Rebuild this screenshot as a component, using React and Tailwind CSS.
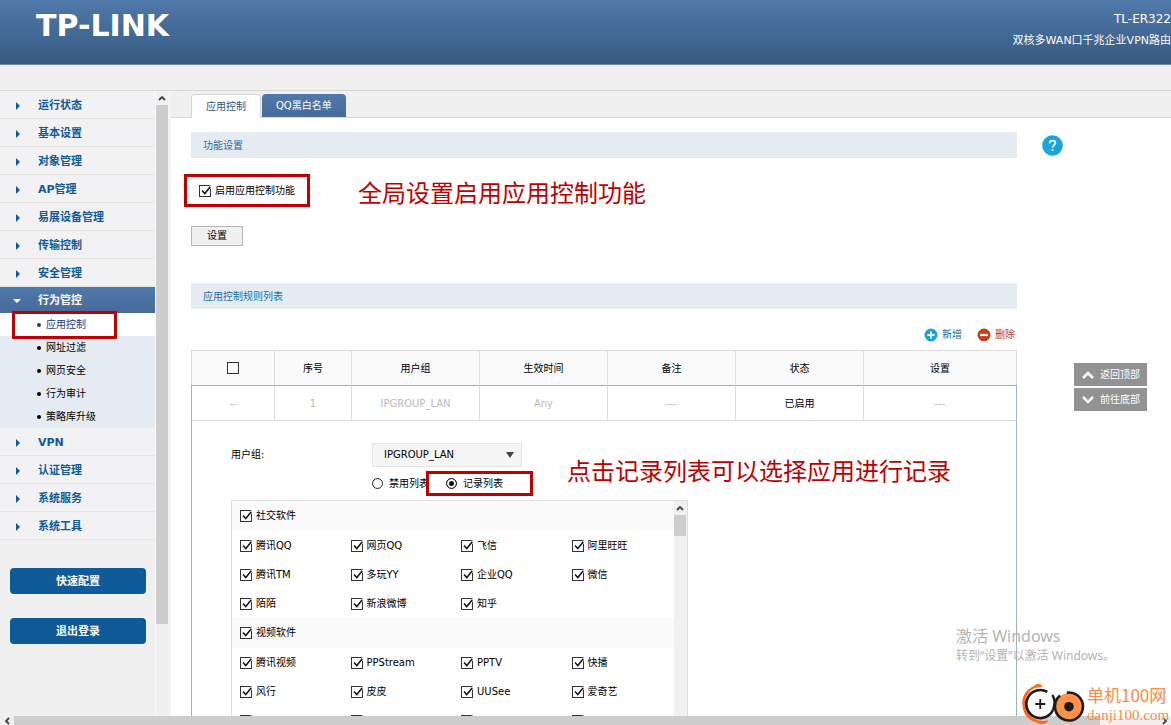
import React, { useState } from 'react';
import { clsx } from 'clsx';

// === DATA ===
const MENU_TOP = ['运行状态', '基本设置', '对象管理', 'AP管理', '易展设备管理', '传输控制', '安全管理'];
const MENU_BOTTOM = ['VPN', '认证管理', '系统服务', '系统工具'];
const SUB_MENU = ['应用控制', '网址过滤', '网页安全', '行为审计', '策略库升级'];

const APP_GROUPS = [
  {
    name: '社交软件',
    apps: ['腾讯QQ', '网页QQ', '飞信', '阿里旺旺', '腾讯TM', '多玩YY', '企业QQ', '微信', '陌陌', '新浪微博', '知乎'],
  },
  {
    name: '视频软件',
    apps: ['腾讯视频', 'PPStream', 'PPTV', '快播', '风行', '皮皮', 'UUSee', '爱奇艺'],
    unnamed: 4,
  },
];

const COLUMNS = [
  { title: '序号', width: 'w-[77px]', value: '1' },
  { title: '用户组', width: 'w-[128px]', value: 'IPGROUP_LAN' },
  { title: '生效时间', width: 'w-[128px]', value: 'Any' },
  { title: '备注', width: 'w-[128px]', value: '---' },
  { title: '状态', width: 'w-[128px]', value: '已启用', active: true },
  { title: '设置', width: '', value: '---' },
];

// === SMALL PARTS ===
const CheckBox = ({ label, defaultChecked = true, hideLabel = false }) => (
  <label className="flex items-center gap-1">
    <span className="relative block size-3 shrink-0">
      <input
        type="checkbox"
        defaultChecked={defaultChecked}
        aria-label={hideLabel ? label : undefined}
        className="peer block size-3 appearance-none border border-[#333] bg-white"
      />
      <svg viewBox="0 0 12 12" className="pointer-events-none absolute inset-0 hidden overflow-visible peer-checked:block">
        <path d="M10.5 0.5H12V3.5L10.5 4z" fill="#fff" />
        <path d="M3 5.5L5.8 8.5L11.3 1.8" fill="none" stroke="#111" strokeWidth="1.5" />
      </svg>
    </span>
    {!hideLabel && <span className="whitespace-nowrap">{label}</span>}
  </label>
);

const RadioButton = ({ label, checked, onChange }) => (
  <label className="flex items-center gap-[6px] whitespace-nowrap">
    <input
      type="radio"
      name="list-type"
      checked={checked}
      onChange={onChange}
      className="size-[11px] shrink-0 appearance-none rounded-full border border-[#222] bg-white checked:bg-[#111] checked:shadow-[inset_0_0_0_2px_#fff]"
    />
    {label}
  </label>
);

const ArrowHead = ({ className, d }) => (
  <svg viewBox="0 0 8 8" className={clsx('size-2 fill-none', className)}>
    <path d={d} stroke="currentColor" strokeWidth="1.8" />
  </svg>
);

const SectionTitle = ({ children }) => (
  <h2 className="flex h-[26px] items-center bg-[#e4ebf2] px-3 pt-[2px] text-[#1f6ba5]">{children}</h2>
);

const MenuItem = ({ label }) => (
  <li>
    <a href="#menu" className="flex h-7 items-center border-b border-[#e6e4df] pt-[3px] pl-4 text-[11px] font-bold text-[#105a97]">
      <svg viewBox="0 0 4 8" className="mr-[18px] h-2 w-1 fill-current">
        <path d="M0 0L4 4L0 8z" />
      </svg>
      {label}
    </a>
  </li>
);

// === PAGE AREAS ===
const Header = () => (
  <header className="shrink-0">
    <div className="flex h-[65px] items-start justify-between overflow-hidden border-b border-[#6f86a0] bg-linear-to-b from-[#5079aa] to-[#375a82] pl-9 text-white">
      <h1 className="pt-[10px] text-[30px] leading-8 font-bold">TP-LINK</h1>
      <div className="pt-[9px] text-right text-[11px] leading-[21px]">
        <p className="text-xs leading-[21px]">TL-ER322</p>
        <p>双核多WAN口千兆企业VPN路由</p>
      </div>
    </div>
    <div className="h-[26px] border-b border-[#d6d6d6] bg-[#f0f0f0]" />
  </header>
);

const Sidebar = () => (
  <aside className="flex w-[171px] shrink-0 bg-[#f0f0f0]">
    <div className="min-w-0 flex-1 border-r border-[#fafafa]">
      <ul className="bg-[#f2f2f4]">
        {MENU_TOP.map((label) => (
          <MenuItem key={label} label={label} />
        ))}
        <li>
          <a href="#behavior" className="flex h-[26px] items-center bg-linear-to-b from-[#5079aa] to-[#46699a] pt-[2px] pl-[13px] text-[11px] font-bold text-white">
            <svg viewBox="0 0 8 4" className="mr-[17px] h-1 w-2 fill-current">
              <path d="M0 0H8L4 4z" />
            </svg>
            行为管控
          </a>
          <ul className="bg-[#e4ebf2]">
            {SUB_MENU.map((label, index) => (
              <li key={label} className={clsx('relative', index === 0 && 'bg-white')}>
                <a href="#sub" className={clsx('flex h-[23px] items-center gap-[5px] pl-[37px]', index === 0 && 'text-[#23388c]')}>
                  <span className="size-1 rounded-full bg-current" />
                  {label}
                </a>
                {index === 0 && (
                  <span className="pointer-events-none absolute -top-[2px] left-3 z-10 h-7 w-[105px] border-3 border-[#c00000]" />
                )}
              </li>
            ))}
          </ul>
        </li>
        {MENU_BOTTOM.map((label) => (
          <MenuItem key={label} label={label} />
        ))}
      </ul>
      <div className="flex flex-col gap-6 pt-7 pr-[9px] pl-[10px] text-[11px] font-bold text-white">
        <button type="button" className="h-[26px] rounded-sm bg-[#105a97] pt-[2px]">快速配置</button>
        <button type="button" className="h-[26px] rounded-sm bg-[#105a97] pt-[2px]">退出登录</button>
      </div>
    </div>
    {/* Menu scrollbar */}
    <div className="flex w-[15px] flex-col border-r-3 border-[#f4f4f4] bg-[#f0f0f0]">
      <div className="flex h-[14px] items-center justify-center text-[#444]">
        <ArrowHead d="M1 6L4 3L7 6" />
      </div>
      <div className="h-[83%] bg-[#cdcdcd]" />
    </div>
  </aside>
);

const Tabs = () => (
  <div className="flex h-[27px] shrink-0 items-end gap-px border-b border-[#d6d6d6] bg-[#f0f0f0] pl-5">
    <button type="button" className="-mb-px h-6 rounded-t border border-b-0 border-[#d6d6d6] bg-white px-[14px] text-[#2f5684]">
      应用控制
    </button>
    <button type="button" className="h-[23px] rounded-t bg-linear-to-b from-[#5079aa] to-[#46699a] px-[14px] text-white">
      QQ黑白名单
    </button>
  </div>
);

const Toolbar = () => (
  <div className="flex h-[41px] items-center justify-end gap-[15px] pt-[11px] pr-[2px]">
    <button type="button" className="flex items-center gap-1 text-[#1f6ba5]">
      <svg viewBox="0 0 14 14" className="size-[14px]">
        <circle cx="7" cy="7" r="6.5" fill="#17a5e0" />
        <path d="M7 3.5V10.5M3.5 7H10.5" stroke="#fff" strokeWidth="1.8" />
      </svg>
      新增
    </button>
    <button type="button" className="flex items-center gap-1 text-[#c0401c]">
      <svg viewBox="0 0 14 14" className="size-[14px]">
        <circle cx="7" cy="7" r="6.5" fill="#bf4322" />
        <path d="M3.2 7H10.8" stroke="#fff" strokeWidth="2.2" />
      </svg>
      删除
    </button>
  </div>
);

const RuleTable = () => (
  <table className="w-full table-fixed border-separate border-spacing-0 text-center">
    <thead>
      <tr className="h-[35px] bg-[#fafafa]">
        <th className="w-[83px] border-t border-l border-[#ddd] font-normal">
          <span className="flex justify-center">
            <CheckBox label="全选" defaultChecked={false} hideLabel />
          </span>
        </th>
        {COLUMNS.map((col) => (
          <th key={col.title} className={clsx('border-t border-l border-[#ddd] pt-[2px] font-normal last:border-r', col.width)}>
            {col.title}
          </th>
        ))}
      </tr>
    </thead>
    <tbody>
      <tr className="h-9 text-[#bbb]">
        <td className="border border-t-[#9db0c8] border-r-0 border-b-[#ddd] border-l-[#9db0c8] pt-[2px]">--</td>
        {COLUMNS.map((col) => (
          <td
            key={col.title}
            className={clsx(
              'border-y border-l border-t-[#9db0c8] border-b-[#ddd] border-l-[#ddd] pt-[2px] last:border-r last:border-r-[#9db0c8]',
              col.active && 'text-black'
            )}
          >
            {col.value}
          </td>
        ))}
      </tr>
    </tbody>
  </table>
);

const AppList = () => (
  <div className="mt-1 flex w-[457px] border border-b-0 border-[#ddd]">
    <div className="flex-1">
      {APP_GROUPS.map((group) => (
        <section key={group.name}>
          <div className="flex h-[30px] items-center bg-[#fafafa] pl-2">
            <CheckBox label={group.name} />
          </div>
          <div className="grid grid-cols-4">
            {group.apps.map((name) => (
              <div key={name} className="flex h-[29px] items-center pl-2">
                <CheckBox label={name} />
              </div>
            ))}
            {Array.from({ length: group.unnamed || 0 }, (_, i) => (
              <div key={i} className="flex h-[29px] items-center pl-2">
                <CheckBox label={`${group.name} ${i + 1}`} hideLabel />
              </div>
            ))}
          </div>
        </section>
      ))}
    </div>
    <div className="w-[13px] bg-[#f0f0f0] pr-px">
      <div className="flex h-[14px] items-center justify-center text-[#444]">
        <ArrowHead d="M1 6L4 3L7 6" />
      </div>
      <div className="h-[21px] bg-[#cdcdcd]" />
    </div>
  </div>
);

const RulePanel = () => {
  const [listType, setListType] = useState('record');

  return (
    <div className="relative min-h-0 flex-1 overflow-hidden border-x border-[#9db0c8] pt-[22px] pl-[39px]">
      <div className="flex items-center">
        <label htmlFor="user-group" className="w-[141px]">用户组:</label>
        <div className="relative w-[150px]">
          <select id="user-group" className="block h-6 w-full appearance-none border border-[#e4e4e4] bg-[#f5f5f5] pl-[11px]">
            <option>IPGROUP_LAN</option>
          </select>
          <svg viewBox="0 0 8 6" className="pointer-events-none absolute top-[9px] right-2 h-[6px] w-2 fill-[#444]">
            <path d="M0 0H8L4 6z" />
          </svg>
        </div>
      </div>
      <div className="mt-1 flex h-[25px] items-center pl-[141px]">
        <div className="w-[54px]">
          <RadioButton label="禁用列表" checked={listType === 'forbid'} onChange={() => setListType('forbid')} />
        </div>
        <div className="relative z-10 flex h-[25px] w-[107px] items-center border-3 border-[#c00000] bg-white pl-[17px]">
          <RadioButton label="记录列表" checked={listType === 'record'} onChange={() => setListType('record')} />
        </div>
      </div>
      <AppList />
      <p className="absolute top-[35px] left-[375px] text-2xl whitespace-nowrap text-[#c00000]">
        点击记录列表可以选择应用进行记录
      </p>
    </div>
  );
};

const SideTools = () => (
  <div className="w-[154px] shrink-0 pt-[3px] pl-[25px]">
    <a href="#help" aria-label="帮助" className="block w-[21px]">
      <svg viewBox="0 0 21 21" className="size-[21px]">
        <circle cx="10.5" cy="10.5" r="10.3" fill="#17a5e0" />
        <path
          d="M7.6 8.3C7.6 6.5 8.8 5.6 10.5 5.6C12.2 5.6 13.4 6.5 13.4 8C13.4 9.9 10.7 10.1 10.7 12.4"
          fill="none"
          stroke="#fff"
          strokeWidth="1.7"
        />
        <circle cx="10.6" cy="15" r="1.1" fill="#fff" />
      </svg>
    </a>
    <div className="ml-8 flex w-[73px] flex-col gap-[2px] pt-[207px] text-white">
      <button type="button" className="flex h-[23px] items-center gap-[6px] bg-[#929292] pl-2">
        <svg viewBox="0 0 12 8" className="h-2 w-3 fill-none">
          <path d="M1 7L6 2L11 7" stroke="#fff" strokeWidth="2.5" />
        </svg>
        返回顶部
      </button>
      <button type="button" className="flex h-[23px] items-center gap-[6px] bg-[#929292] pl-2">
        <svg viewBox="0 0 12 8" className="h-2 w-3 fill-none">
          <path d="M1 1L6 6L11 1" stroke="#fff" strokeWidth="2.5" />
        </svg>
        前往底部
      </button>
    </div>
  </div>
);

// Watermarks that float over the page in the lower right corner
const Watermarks = () => (
  <>
    <div className="pointer-events-none absolute right-[51px] bottom-[59px] w-[164px] font-['Noto_Sans','Noto_Sans_CJK_SC',sans-serif] text-[#b4b4b4]">
      <p className="text-base leading-5">激活 Windows</p>
      <p className="text-xs leading-5 whitespace-nowrap">转到“设置”以激活 Windows。</p>
    </div>
    <div className="pointer-events-none absolute right-0 bottom-0 flex h-[42px] w-[149px] items-start gap-px text-[#ff8a45]">
      <svg viewBox="0 0 64 42" className="h-[42px] w-16 shrink-0">
        <path
          d="M20.5 3.5C19.5 0.5 15 0 12 3C4 6.5 0 13 0.3 21C0.8 31 6 37.5 15 39.5C18 42 25 41.5 26.5 37.5C16 39.5 4.5 35 3.4 21.5C3 12.5 8 5.5 15 4.5z"
          fill="#ff6b0d"
        />
        <circle cx="18.3" cy="21" r="14" fill="#fff" />
        <path d="M25.3 8.9A14 14 0 1 0 31 27" fill="none" stroke="#211a1a" strokeWidth="2.6" />
        <path d="M18.3 16V26M13.3 21H23.3" stroke="#211a1a" strokeWidth="1.8" />
        <circle cx="47" cy="23.5" r="13.5" fill="#ff9249" />
        <path d="M44.8 9.7A14 14 0 1 1 33.5 27.3C31.8 21 33.2 16.5 38 12.5" fill="none" stroke="#211a1a" strokeWidth="2.6" />
        <path d="M30.3 12C33 15.5 32.8 22 31 27" fill="none" stroke="#211a1a" strokeWidth="2.4" />
        <circle cx="47" cy="23.7" r="4.8" fill="#211a1a" />
      </svg>
      <div className="whitespace-nowrap">
        <p className="font-['Noto_Sans_CJK_SC',sans-serif] text-[17px] leading-6">单机100网</p>
        <p className="font-['Liberation_Serif',serif] text-[15px] leading-4">danji100.com</p>
      </div>
    </div>
  </>
);

const App = () => (
  <div className="relative flex h-screen flex-col overflow-hidden bg-white font-['DejaVu_Sans','Noto_Sans_CJK_SC',sans-serif] text-[10px] leading-4 text-black">
    <Header />
    <div className="flex min-h-0 flex-1">
      <Sidebar />
      <main className="flex min-w-0 flex-1 flex-col">
        <Tabs />
        <div className="flex min-h-0 flex-1 pt-[14px] pl-5">
          <div className="flex min-w-0 flex-1 flex-col">
            <SectionTitle>功能设置</SectionTitle>
            <div className="mt-4 -ml-[7px] flex h-[33px] items-start">
              <div className="flex h-[33px] w-[126px] items-center border-3 border-[#c00000] pl-3">
                <CheckBox label="启用应用控制功能" />
              </div>
              <p className="pt-1 pl-12 text-2xl whitespace-nowrap text-[#c00000]">全局设置启用应用控制功能</p>
            </div>
            <button type="button" className="mt-[19px] h-5 w-[52px] shrink-0 border border-[#b8b4b8] bg-[#f0f0f0]">设置</button>
            <div className="pt-[37px]">
              <SectionTitle>应用控制规则列表</SectionTitle>
            </div>
            <Toolbar />
            <RuleTable />
            <RulePanel />
          </div>
          <SideTools />
        </div>
      </main>
    </div>
    {/* Page scrollbar */}
    <div className="flex h-[9px] shrink-0 bg-[#f0f0f0] text-[#444]">
      <div className="flex w-[14px] items-center justify-center">
        <ArrowHead d="M6 1L3 4L6 7" />
      </div>
      <div className="flex-1 bg-[#cdcdcd]" />
      <div className="flex w-[71px] items-center justify-end pr-[2px]">
        <ArrowHead d="M2 1L5 4L2 7" />
      </div>
    </div>
    <Watermarks />
  </div>
);

export default App;
